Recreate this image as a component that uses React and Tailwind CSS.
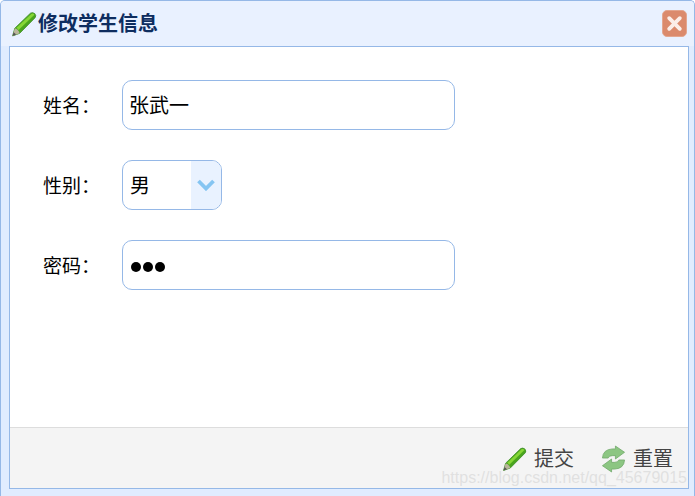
import React from 'react';

const font = { cjk: "font-['Liberation_Sans','Noto_Sans_CJK_SC',sans-serif]" };

const Pencil = ({ className }) => (
  <svg viewBox="0 0 24 24" className={className}>
    <path d="M1.5 23 L3.5 16 L18 2 Q20 0.8 22 2.5 Q23.6 4.4 22.2 6.2 L8 20.6 Z" fill="#4aa51d" stroke="#3f8f28" strokeWidth="0.8" />
    <path d="M5 15.5 L19 2.5 Q21 2 21.6 3.4 L7 17.6 Z" fill="#86d636" />
    <path d="M1.5 23 L3.5 16 Q6.5 16.5 8 20.6 Z" fill="#b9b59a" />
    <path d="M1.5 23 L2.4 19.6 L4.8 21.8 Z" fill="#555" />
  </svg>
);

const Reload = ({ className }) => (
  <svg viewBox="0 0 26 28" className={className}>
    <path d="M1.5 13 Q2 4 12 3.5 L15 3.5 L15 0.5 L24.5 7 L15 14 L15 10.5 L12 10.5 Q8 10.5 7.5 13 Z" fill="#8cc682" stroke="#6fa868" strokeWidth="0.8" />
    <path d="M24.5 15 Q24 24 14 24.5 L11 24.5 L11 27.5 L1.5 21 L11 14 L11 17.5 L14 17.5 Q18 17.5 18.5 15 Z" fill="#8cc682" stroke="#6fa868" strokeWidth="0.8" />
  </svg>
);

const Field = ({ label, children }) => (
  <div className="flex items-center h-[50px] mb-[30px]">
    <span className="w-[79px] pt-[4px] text-[19px] text-black">{label}</span>
    {children}
  </div>
);

export default function App() {
  return (
    <div className={`w-[695px] h-[496px] overflow-hidden flex flex-col bg-[#e0ecff] border border-[#95b8e7] border-b-0 rounded-t-[5px] ${font.cjk}`}>
      {/* title bar */}
      <div className="h-[45px] shrink-0 flex items-center justify-between pl-[10px] pr-[7px] bg-[#e9f1ff]">
        <div className="flex items-center gap-[1px]">
          <Pencil className="w-[26px] h-[26px]" />
          <span className="text-[20px] font-bold text-[#0e2d5f]">修改学生信息</span>
        </div>
        <button className="w-[25px] h-[27px] rounded-[5px] bg-[#db8a6c] border border-[#e3a68f] flex items-center justify-center">
          <svg viewBox="0 0 16 16" className="w-[17px] h-[17px]">
            <path d="M3 3 L13 13 M13 3 L3 13" stroke="#fbeee8" strokeWidth="3.6" strokeLinecap="round" />
          </svg>
        </button>
      </div>

      {/* body */}
      <div className="ml-[8px] w-[680px] h-[443px] shrink-0 flex flex-col border border-[#95b8e7]">
        <div className="flex-1 bg-white pl-[33px] pt-[33px]">
          <Field label="姓名：">
            <div className="w-[333px] h-[50px] rounded-[10px] border border-[#95b8e7] flex items-center pl-[6px] pt-[2px] text-[20px] text-black">张武一</div>
          </Field>
          <Field label="性别：">
            <div className="w-[100px] h-[50px] rounded-[10px] border border-[#95b8e7] flex overflow-hidden text-[20px] text-black">
              <span className="flex-1 flex items-center pl-[7px] pt-[2px]">男</span>
              <span className="w-[30px] bg-[#e9f2ff] flex items-center justify-center">
                <svg viewBox="0 0 18 12" className="w-[18px] h-[12px]">
                  <path d="M1.5 2 L9 9.5 L16.5 2" fill="none" stroke="#85c5f2" strokeWidth="3.8" />
                </svg>
              </span>
            </div>
          </Field>
          <Field label="密码：">
            <div className="w-[333px] h-[50px] rounded-[10px] border border-[#95b8e7] flex items-center gap-[2px] pl-[8px] pt-[4px]">
              <i className="w-[10px] h-[10px] rounded-full bg-black" />
              <i className="w-[10px] h-[10px] rounded-full bg-black" />
              <i className="w-[10px] h-[10px] rounded-full bg-black" />
            </div>
          </Field>
        </div>

        {/* footer */}
        <div className="relative h-[61px] shrink-0 bg-[#f4f4f4] border-t border-[#dddddd] flex items-center justify-end pr-[15px] gap-[27px] text-[20px] text-[#444444]">
          <div className="flex items-center gap-[7px] pt-[2px]">
            <Pencil className="w-[25px] h-[26px]" />
            <span>提交</span>
          </div>
          <div className="flex items-center gap-[7px] pt-[2px]">
            <Reload className="w-[25px] h-[28px]" />
            <span>重置</span>
          </div>
          <span className="absolute right-[1px] top-[38px] text-[16px] leading-[24px] text-[#dedede]/90">https://blog.csdn.net/qq_45679015</span>
        </div>
      </div>
    </div>
  );
}
